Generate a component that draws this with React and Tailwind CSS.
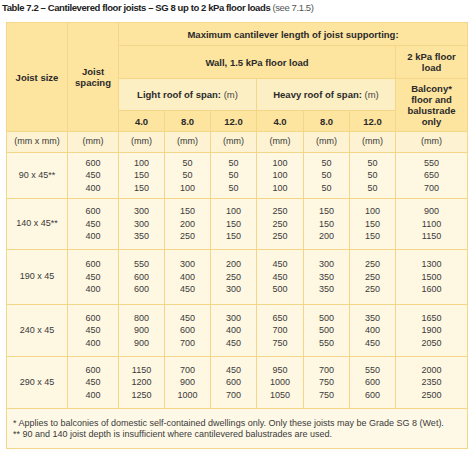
const rows = [
  {
    size: '90 x 45**',
    h: 'h-[46px]',
    spacing: ['600', '450', '400'],
    cols: [
      ['100', '150', '150'],
      ['50', '50', '100'],
      ['50', '50', '50'],
      ['100', '100', '100'],
      ['50', '50', '50'],
      ['50', '50', '50'],
      ['550', '650', '700'],
    ],
  },
  {
    size: '140 x 45**',
    h: 'h-[51px]',
    spacing: ['600', '450', '400'],
    cols: [
      ['300', '300', '350'],
      ['150', '200', '250'],
      ['100', '150', '150'],
      ['250', '250', '250'],
      ['150', '150', '200'],
      ['100', '150', '150'],
      ['900', '1100', '1150'],
    ],
  },
  {
    size: '190 x 45',
    h: 'h-[55px]',
    spacing: ['600', '450', '400'],
    cols: [
      ['550', '600', '600'],
      ['300', '400', '450'],
      ['200', '250', '300'],
      ['450', '450', '500'],
      ['300', '350', '350'],
      ['250', '250', '250'],
      ['1300', '1500', '1600'],
    ],
  },
  {
    size: '240 x 45',
    h: 'h-[52px]',
    spacing: ['600', '450', '400'],
    cols: [
      ['800', '900', '900'],
      ['450', '600', '700'],
      ['300', '400', '450'],
      ['650', '700', '750'],
      ['500', '500', '550'],
      ['350', '400', '450'],
      ['1650', '1900', '2050'],
    ],
  },
  {
    size: '290 x 45',
    h: 'h-[52px]',
    spacing: ['600', '450', '400'],
    cols: [
      ['1150', '1200', '1250'],
      ['700', '900', '1000'],
      ['450', '600', '700'],
      ['950', '1000', '1050'],
      ['700', '750', '750'],
      ['550', '600', '600'],
      ['2000', '2350', '2500'],
    ],
  },
];

const cell = 'border border-[#f3d688] text-center align-middle';
const head = `${cell} bg-[#fde49f] font-bold text-[#2a2a2a]`;

const Stack = ({ items }) => (
  <div className="flex flex-col leading-[12.5px]">
    {items.map((v, i) => (
      <span key={i}>{v}</span>
    ))}
  </div>
);

export default function App() {
  return (
    <div className="w-[474px] h-[454px] bg-white font-['Liberation_Sans',Arial,sans-serif] text-[#3a3a3a]">
      <div className="pl-[2px] pt-[2px] h-[22px] text-[9.5px] leading-[12px] tracking-[-0.4px] text-[#222]">
        <span className="font-bold">
          Table 7.2 – Cantilevered floor joists – SG 8 up to 2 kPa floor loads
        </span>
        <span className="text-[#555]"> (see 7.1.5)</span>
      </div>
      <table className="ml-[6px] w-[461px] border-collapse table-fixed text-[9px]">
        <colgroup>
          <col className="w-[61px]" />
          <col className="w-[51px]" />
          <col className="w-[46px]" />
          <col className="w-[46px]" />
          <col className="w-[46px]" />
          <col className="w-[47px]" />
          <col className="w-[46px]" />
          <col className="w-[46px]" />
          <col className="w-[72px]" />
        </colgroup>
        <thead className="text-[9.5px] leading-[11px]">
          <tr className="h-[23px]">
            <th rowSpan={4} className={head}>Joist size</th>
            <th rowSpan={4} className={head}>
              Joist
              <br />
              spacing
            </th>
            <th colSpan={7} className={head}>
              Maximum cantilever length of joist supporting:
            </th>
          </tr>
          <tr className="h-[33px]">
            <th colSpan={6} className={head}>Wall, 1.5 kPa floor load</th>
            <th className={head}>
              2 kPa floor
              <br />
              load
            </th>
          </tr>
          <tr className="h-[32px]">
            <th colSpan={3} className={`${head} bg-[#fdefc4]`}>
              Light roof of span: <span className="font-normal text-[#444]">(m)</span>
            </th>
            <th colSpan={3} className={`${head} bg-[#fdefc4]`}>
              Heavy roof of span: <span className="font-normal text-[#444]">(m)</span>
            </th>
            <th rowSpan={2} className={head}>
              Balcony*
              <br />
              floor and
              <br />
              balustrade
              <br />
              only
            </th>
          </tr>
          <tr className="h-[21px]">
            {['4.0', '8.0', '12.0', '4.0', '8.0', '12.0'].map((s, i) => (
              <th key={i} className={head}>{s}</th>
            ))}
          </tr>
        </thead>
        <tbody>
          <tr className="h-[21px] bg-[#fdf2d2]">
            <td className={cell}>(mm x mm)</td>
            {Array.from({ length: 8 }).map((_, i) => (
              <td key={i} className={cell}>(mm)</td>
            ))}
          </tr>
          {rows.map((r) => (
            <tr key={r.size} className={`${r.h} bg-[#fef7e2]`}>
              <td className={cell}>{r.size}</td>
              <td className={cell}>
                <Stack items={r.spacing} />
              </td>
              {r.cols.map((c, i) => (
                <td key={i} className={cell}>
                  <Stack items={c} />
                </td>
              ))}
            </tr>
          ))}
          <tr className="h-[40px] bg-[#fef8e6]">
            <td colSpan={9} className={`${cell} text-left px-[6px] leading-[10.5px]`}>
              * Applies to balconies of domestic self-contained dwellings only. Only these joists may be Grade SG 8 (Wet).
              <br />
              ** 90 and 140 joist depth is insufficient where cantilevered balustrades are used.
            </td>
          </tr>
        </tbody>
      </table>
    </div>
  );
}
